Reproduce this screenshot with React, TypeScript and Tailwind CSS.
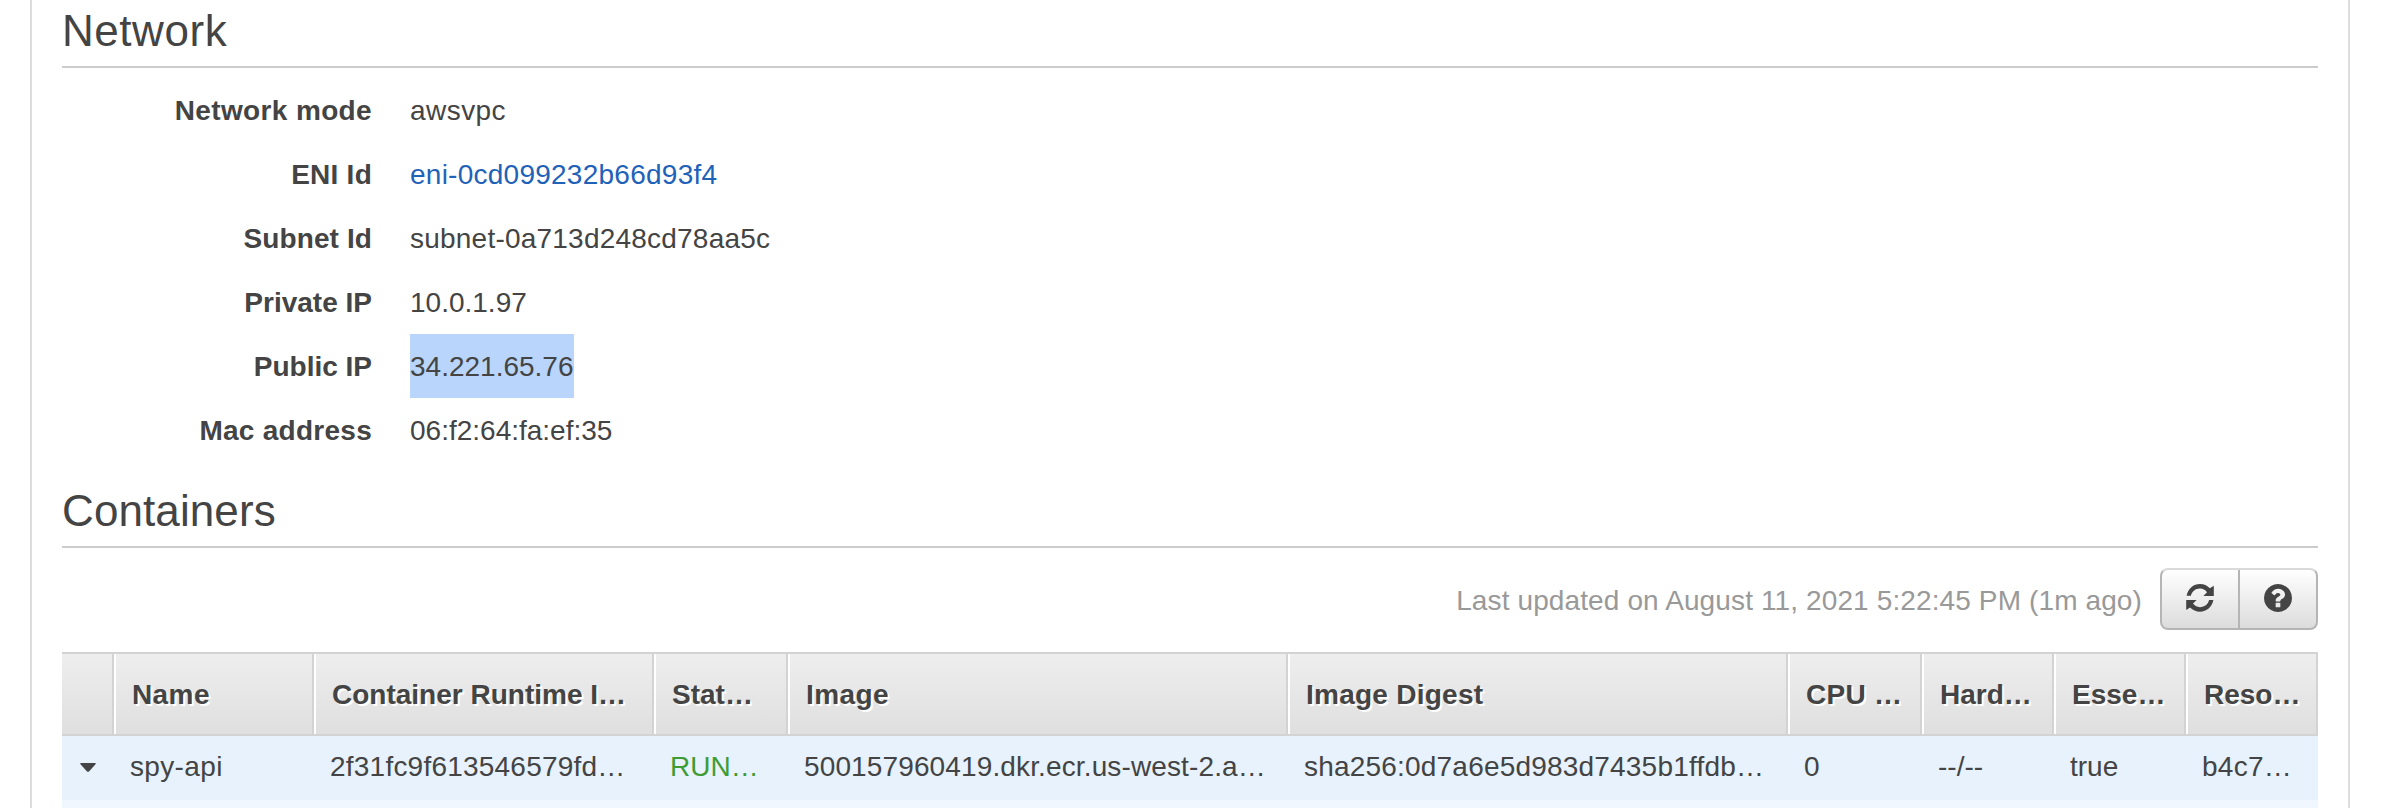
import type { ReactNode } from "react";

type Detail = { label: string; value: string; labelStyle?: string; valueStyle?: string };
type Column = { head: string; cell: string; width: string; headStyle?: string; cellStyle?: string };

const details: Detail[] = [
  { label: "Network mode", value: "awsvpc", labelStyle: "tracking-[0.36px]", valueStyle: "tracking-[0.45px]" },
  {
    label: "ENI Id",
    value: "eni-0cd099232b66d93f4",
    labelStyle: "tracking-[0.25px]",
    valueStyle: "tracking-[0.25px] text-[#1f62b8]",
  },
  {
    label: "Subnet Id",
    value: "subnet-0a713d248cd78aa5c",
    labelStyle: "tracking-[0.1px]",
    valueStyle: "tracking-[0.22px]",
  },
  { label: "Private IP", value: "10.0.1.97" },
  { label: "Public IP", value: "34.221.65.76", valueStyle: "bg-[#b9d5fb]" },
  { label: "Mac address", value: "06:f2:64:fa:ef:35", labelStyle: "tracking-[0.27px]" },
];

const columns: Column[] = [
  {
    head: "Name",
    cell: "spy-api",
    width: "w-[200px]",
    headStyle: "tracking-[0.4px]",
    cellStyle: "tracking-[0.35px]",
  },
  {
    head: "Container Runtime I…",
    cell: "2f31fc9f613546579fd…",
    width: "w-[340px]",
    cellStyle: "tracking-[0.22px]",
  },
  { head: "Stat…", cell: "RUN…", width: "w-[134px]", cellStyle: "text-[#3f9c35]" },
  {
    head: "Image",
    cell: "500157960419.dkr.ecr.us-west-2.a…",
    width: "w-[500px]",
    headStyle: "tracking-[0.4px]",
    cellStyle: "tracking-[0.13px]",
  },
  {
    head: "Image Digest",
    cell: "sha256:0d7a6e5d983d7435b1ffdb…",
    width: "w-[500px]",
    headStyle: "tracking-[0.25px]",
    cellStyle: "tracking-[0.2px]",
  },
  { head: "CPU …", cell: "0", width: "w-[134px]", headStyle: "tracking-[0.25px]" },
  { head: "Hard…", cell: "--/--", width: "w-[132px]" },
  { head: "Esse…", cell: "true", width: "w-[132px]" },
  { head: "Reso…", cell: "b4c7…", width: "w-[132px]", cellStyle: "tracking-[0.25px]" },
];

function Title({ children, spacing }: { children: ReactNode; spacing: string }) {
  return (
    <h2 className={`h-[68px] border-b-2 border-[#ccc] pt-[7px] text-[44px] leading-[48px] ${spacing}`}>
      {children}
    </h2>
  );
}

const arrow =
  "M.6 11.700C1.900 4.700 7.400 0 14 0c3.900 0 7.300 1.500 9.900 4.200l3.900-2.500v10.200H17.400l3.600-3.700C19.200 6 16.800 4.600 14 4.600c-4.400 0-8 2.800-9.100 7.100z";

function RefreshIcon() {
  return (
    <svg viewBox="0 0 28 28" className="size-[28px] fill-current">
      <path d={arrow} />
      <path d={arrow} transform="rotate(180 14 13.900)" />
    </svg>
  );
}

function HelpIcon() {
  return (
    <svg viewBox="0 0 1536 1536" className="size-[28px] fill-current">
      <path d="M896 1248v-192q0-14-9-23t-23-9h-192q-14 0-23 9t-9 23v192q0 14 9 23t23 9h192q14 0 23-9t9-23zm256-672q0-88-55.500-163t-138.500-116-170-41q-243 0-371 213-15 24 8 42l132 100q7 6 19 6 16 0 25-12 53-68 86-92 34-24 86-24 48 0 85.500 26t37.500 59q0 38-20 61t-68 45q-63 28-115.500 86.500t-52.500 125.500v36q0 14 9 23t23 9h192q14 0 23-9t9-23q0-19 21.500-49.500t54.500-49.500q32-18 49-28.500t46-35 44.500-48 28-60.500 12.500-81zm384 192q0 209-103 385.500t-279.500 279.500-385.500 103-385.500-103-279.500-279.500-103-385.500 103-385.500 279.500-279.500 385.500-103 385.500 103 279.500 279.500 103 385.500z" />
    </svg>
  );
}

export default function App() {
  return (
    <div className="h-[808px] w-[2386px] overflow-hidden bg-white font-['Liberation_Sans',Arial,sans-serif] text-[28px] text-[#444]">
      <main className="ml-[30px] h-full w-[2320px] border-x-2 border-[#ddd] px-[30px]">
        <Title spacing="tracking-[0.55px]">Network</Title>
        <dl className="pt-[10px]">
          {details.map((d) => (
            <div key={d.label} className="flex h-[64px] leading-[66px]">
              <dt className={`w-[310px] text-right font-bold ${d.labelStyle ?? ""}`}>{d.label}</dt>
              <dd className={`ml-[38px] h-[64px] ${d.valueStyle ?? ""}`}>{d.value}</dd>
            </div>
          ))}
        </dl>
        <div className="mt-[18px]">
          <Title spacing="tracking-[0.1px]">Containers</Title>
        </div>
        <div className="flex h-[104px] items-start justify-end pt-[20px]">
          <p className="mr-[18px] leading-[66px] tracking-[0.12px] text-[#999]">
            Last updated on August 11, 2021 5:22:45 PM (1m ago)
          </p>
          <div className="flex h-[62px] w-[158px] overflow-hidden rounded-[8px] border-2 border-[#b5b5b5] border-t-[#dadada] bg-linear-to-b from-white to-[#dcdcdc]">
            <button className="flex w-[78px] items-center justify-center border-r-2 border-[#b5b5b5] pb-[2px]">
              <RefreshIcon />
            </button>
            <button className="flex w-[76px] items-center justify-center pb-[2px]">
              <HelpIcon />
            </button>
          </div>
        </div>
        <div className="flex h-[84px] border-y-2 border-r-2 border-[#d3d3d3] bg-linear-to-b from-[#eee] to-[#dfdfdf] font-bold leading-[82px] [text-shadow:2px_2px_0_#fff]">
          <div className="w-[52px] shrink-0 border-r-2 border-[#d3d3d3]" />
          {columns.map((c, i) => (
            <div
              key={c.head}
              className={`${c.width} ${i < columns.length - 1 ? "border-r-2" : ""} ${c.headStyle ?? ""} h-[80px] shrink-0 whitespace-nowrap border-l-2 border-l-white border-r-[#d3d3d3] pl-[16px]`}
            >
              {c.head}
            </div>
          ))}
        </div>
        <div className="flex h-[64px] bg-[#e7f2fd] leading-[62px]">
          <div className="flex w-[52px] shrink-0 items-center pb-[1px] pl-[18px]">
            <svg viewBox="0 0 16 9" className="h-[9px] w-[16px] fill-current">
              <path d="M1 0h14q1.500 0 .5 1.200L9 8.400q-1 .9-2 0L.5 1.200Q-.5 0 1 0z" />
            </svg>
          </div>
          {columns.map((c) => (
            <div
              key={c.cell}
              className={`${c.width} ${c.cellStyle ?? ""} h-[64px] shrink-0 whitespace-nowrap pl-[16px]`}
            >
              {c.cell}
            </div>
          ))}
        </div>
        <div className="h-[8px] bg-[#f0f7ff]" />
      </main>
    </div>
  );
}
